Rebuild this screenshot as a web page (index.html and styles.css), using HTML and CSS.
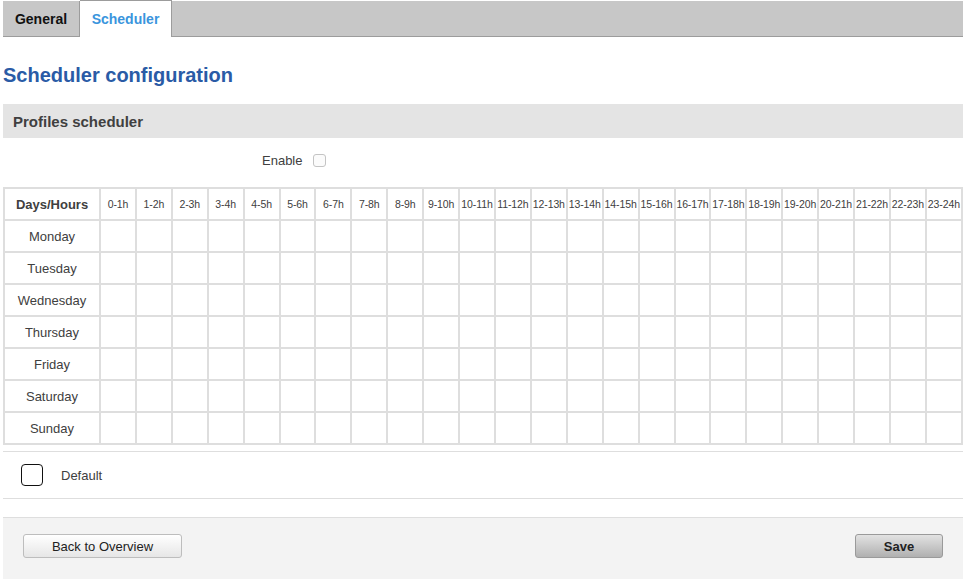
FILE: index.html
```html
<!DOCTYPE html>
<html>
<head>
<meta charset="utf-8">
<link rel="stylesheet" href="styles.css">
</head>
<body>
<div class="page">
  <div class="tabs">
    <div class="tab">General</div>
    <div class="tab active">Scheduler</div>
  </div>
  <h2 class="title">Scheduler configuration</h2>
  <div class="section-head">Profiles scheduler</div>
  <div class="enable-row">
    <span class="enable-label">Enable</span>
    <span class="small-check"></span>
  </div>
  <table class="grid">
    <colgroup>
      <col class="c-day">
      <col span="24" class="c-hour">
    </colgroup>
    <thead>
      <tr>
        <th class="day-head">Days/Hours</th>
        <th>0-1h</th><th>1-2h</th><th>2-3h</th><th>3-4h</th><th>4-5h</th><th>5-6h</th>
        <th>6-7h</th><th>7-8h</th><th>8-9h</th><th>9-10h</th><th>10-11h</th><th>11-12h</th>
        <th>12-13h</th><th>13-14h</th><th>14-15h</th><th>15-16h</th><th>16-17h</th><th>17-18h</th>
        <th>18-19h</th><th>19-20h</th><th>20-21h</th><th>21-22h</th><th>22-23h</th><th>23-24h</th>
      </tr>
    </thead>
    <tbody id="rows"></tbody>
  </table>
  <div class="default-row">
    <span class="big-check"></span>
    <span class="default-label">Default</span>
  </div>
  <div class="footer">
    <button class="btn">Back to Overview</button>
    <button class="btn btn-save">Save</button>
  </div>
</div>
<script src="app.js"></script>
</body>
</html>
```

FILE: app.js
```js
var days = ["Monday","Tuesday","Wednesday","Thursday","Friday","Saturday","Sunday"];
var tb = document.getElementById("rows");
days.forEach(function (d) {
  var tr = document.createElement("tr");
  var td = document.createElement("td");
  td.className = "day";
  td.textContent = d;
  tr.appendChild(td);
  for (var i = 0; i < 24; i++) tr.appendChild(document.createElement("td"));
  tb.appendChild(tr);
});
```

FILE: styles.css
```css
html, body {
  margin: 0;
  padding: 0;
  background: #ffffff;
  font-family: "Liberation Sans", Arial, sans-serif;
  color: #404040;
}

.page {
  padding-left: 3px;
  width: 960px;
}

.tabs {
  margin-top: 1px;
  height: 35px;
  background: #c7c7c7;
  border-bottom: 1px solid #9c9c9c;
  display: flex;
  align-items: stretch;
}

.tab {
  width: 76px;
  border-right: 1px solid #9c9c9c;
  font-size: 14px;
  font-weight: bold;
  color: #111;
  display: flex;
  align-items: center;
  justify-content: center;
}

.tab.active {
  width: 91px;
  background: #ffffff;
  color: #3a95dd;
  border-top: 1px solid #9c9c9c;
  border-right: 1px solid #9c9c9c;
  margin-top: -1px;
  margin-bottom: -1px;
  height: 36px;
}

.title {
  margin: 28px 0 0 0;
  height: 39px;
  font-size: 20px;
  font-weight: bold;
  color: #2a5ba6;
  line-height: 20px;
}

.section-head {
  height: 34px;
  background: #e4e4e4;
  font-size: 15px;
  font-weight: bold;
  color: #404040;
  padding-left: 10px;
  display: flex;
  align-items: center;
}

.enable-row {
  height: 44px;
  display: flex;
  align-items: center;
  padding-left: 259px;
}

.enable-label {
  font-size: 13px;
  color: #404040;
}

.small-check {
  width: 11px;
  height: 11px;
  border: 1px solid #c4c4c4;
  border-radius: 3px;
  margin-left: 11px;
  background: #fbfbfb;
}

.grid {
  margin-top: 5px;
  width: 960px;
  border-collapse: collapse;
  table-layout: fixed;
  border: 2px solid #dedede;
}

.c-day { width: 96px; }

.grid th,
.grid td {
  border: 2px solid #dedede;
  height: 30px;
  padding: 0;
  text-align: center;
  white-space: nowrap;
  overflow: hidden;
}

.grid th {
  font-size: 10.5px;
  font-weight: normal;
  color: #404040;
  letter-spacing: -0.1px;
}

.grid th.day-head {
  font-size: 13px;
  font-weight: bold;
  letter-spacing: 0;
}

.grid td.day {
  font-size: 13px;
  color: #404040;
}

.default-row {
  margin-top: 6px;
  border-top: 1px solid #dedede;
  border-bottom: 1px solid #dedede;
  height: 46px;
  display: flex;
  align-items: center;
  padding-left: 18px;
}

.big-check {
  width: 20px;
  height: 20px;
  border: 1px solid #111;
  border-radius: 4px;
}

.default-label {
  margin-left: 18px;
  font-size: 13px;
  color: #404040;
}

.footer {
  margin-top: 18px;
  border-top: 1px solid #dedede;
  background: #f3f3f3;
  height: 62px;
  display: flex;
  justify-content: space-between;
  align-items: flex-start;
  padding: 16px 20px 0 20px;
  box-sizing: border-box;
}

.btn {
  font-family: "Liberation Sans", Arial, sans-serif;
  font-size: 13px;
  color: #222;
  height: 24px;
  width: 159px;
  border: 1px solid #bdbdbd;
  border-radius: 3px;
  background: linear-gradient(#ffffff, #e6e6e6);
  padding: 0;
}

.btn-save {
  width: 88px;
  font-weight: bold;
  border-color: #9a9a9a;
  background: linear-gradient(#e2e2e2, #b0b0b0);
}
```
